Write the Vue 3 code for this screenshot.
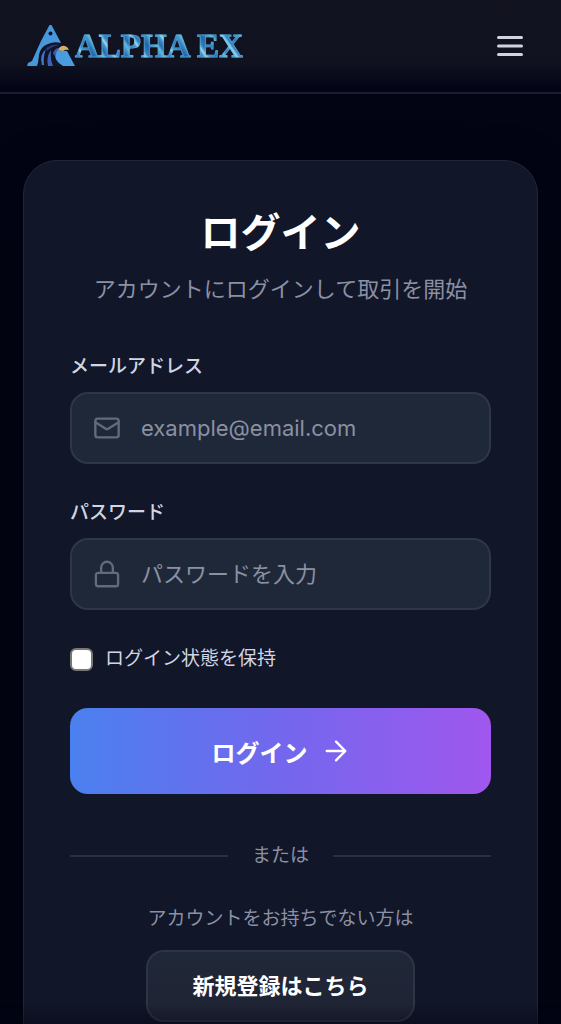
<template>
  <div class="page">
    <!-- Header -->
    <header class="header">
      <a href="#" class="logo" aria-label="ALPHA EX">
        <svg class="logo-mark" viewBox="0 0 48 42" aria-hidden="true">
          <!-- left wing and peak -->
          <path d="M22.500 0 H24.500 L34 18 Q27 16 21 19 Q13 22 12 30 Q12 36 10 41 H0 L1 38 L5 36 L9 27 L14 16 Z" fill="#4797dc" />
          <circle cx="23.500" cy="8.500" r="2" fill="#111426" />
          <!-- right wing -->
          <path d="M30 25 L40 26 L48 41 H34 Q26 37 28 28 Z" fill="#4a9be0" />
          <!-- head and feathers -->
          <path d="M12 41 Q10 29 17 22 Q27 15 37 20 L39 23 Q30 22 28 28 Q27 36 36 41 H27 Q21 35 23 28 Q18 33 19 41 Z" fill="#0f1428" />
          <path d="M15 40 Q12 30 19 24 Q16 31 17 40 Z" fill="#4478c9" />
          <path d="M21 41 Q19 32 24 25 Q23 34 26 41 Z" fill="#3d62b4" />
          <path d="M19 23 Q26 18 33 20 Q25 21 20 26 Z" fill="#253c78" />
          <path d="M26 28 Q28 23 32 23 Q28 28 29 33 Z" fill="#4757a8" />
          <path d="M32 23 Q35 20 38 21 Q41 22 42 25 Q38 24 36 26 L31 25 Z" fill="#d3b268" />
        </svg>
        <span class="logo-text">ALPHA EX</span>
      </a>
      <button type="button" class="menu-btn" aria-label="メニュー">
        <svg viewBox="0 0 32 32" fill="none" stroke="currentColor" stroke-width="3" stroke-linecap="round">
          <path d="M4.500 7.500h23M4.500 16h23M4.500 24.500h23" />
        </svg>
      </button>
    </header>

    <!-- Login card -->
    <main class="main">
      <div class="card">
        <h1 class="title">ログイン</h1>
        <p class="subtitle">アカウントにログインして取引を開始</p>

        <form class="form" @submit.prevent>
          <div class="field">
            <label for="email">メールアドレス</label>
            <div class="input-box">
              <svg class="input-icon" viewBox="0 0 24 24">
                <rect x="2" y="4" width="20" height="16" rx="2" />
                <path d="m2 7 8.970 5.700a1.940 1.940 0 0 0 2.060 0L22 7" />
              </svg>
              <input id="email" v-model="email" type="email" placeholder="example@email.com">
            </div>
          </div>

          <div class="field">
            <label for="password">パスワード</label>
            <div class="input-box">
              <svg class="input-icon" viewBox="0 0 24 24">
                <rect x="2.500" y="11" width="19" height="11.500" rx="2" />
                <path d="M7 11V6.500a5 5 0 0 1 10 0V11" />
              </svg>
              <input id="password" v-model="password" type="password" placeholder="パスワードを入力">
            </div>
          </div>

          <div class="remember">
            <input id="remember" v-model="remember" type="checkbox">
            <label for="remember">ログイン状態を保持</label>
          </div>

          <button type="submit" class="submit-btn">
            <span>ログイン</span>
            <svg viewBox="0 0 24 24">
              <path d="M4 12h16M12 4l8 8-8 8" />
            </svg>
          </button>
        </form>

        <div class="divider"><span>または</span></div>

        <div class="register">
          <p>アカウントをお持ちでない方は</p>
          <a href="#" class="register-btn">新規登録はこちら</a>
        </div>
      </div>
    </main>
    <div class="bottom-fade"></div>
  </div>
</template>

<script setup>
import { ref } from 'vue'

const email = ref('')
const password = ref('')
const remember = ref(false)
</script>

<style>
body {
  margin: 0;
  background: #020414;
}
</style>

<style scoped>
* { box-sizing: border-box; }

.page {
  min-height: 100vh;
  font-family: Inter, "Noto Sans CJK JP", sans-serif;
  font-size: 19px;
  line-height: 28px;
  color: #d1d5e4;
  background: #020414;
}

/* Header */
.header {
  display: flex;
  justify-content: space-between;
  align-items: center;
  height: 94px;
  padding: 0 36px 0 27px;
  background: linear-gradient(to bottom, #12131f 0%, #11121f 68%, #030416 96%);
  border-bottom: 2px solid #1c1d2b;
}

.logo { display: flex; align-items: center; text-decoration: none; }
.logo-mark { width: 48px; height: 42px; }
.logo-text {
  font-family: "Liberation Serif", serif;
  font-size: 33px;
  font-weight: 700;
  line-height: 44px;
  color: transparent;
  -webkit-text-stroke: 1px rgba(110, 190, 225, 0.55);
  background: repeating-linear-gradient(55deg, #2b7cbf 0, #5fbbe2 5px, #2668ac 8px, #3c94d0 12px, #9bdcee 14px, #2f80c2 17px, #2463a6 22px, #2b7cbf 25px);
  -webkit-background-clip: text;
  background-clip: text;
}

.menu-btn {
  display: flex;
  padding: 0;
  border: 0;
  background: none;
  color: #d3d2e2;
}
.menu-btn svg { width: 32px; height: 32px; margin: 0 -1px; }

/* Card */
.main { padding: 66px 23px 64px; }

.card {
  padding: 48px 46px;
  background: #111628;
  border: 1px solid #20263a;
  border-radius: 34px;
  box-shadow: 0 32px 64px rgba(0, 0, 0, 0.35);
}

.title {
  margin: 0 0 16px;
  font-size: 40px;
  font-weight: 700;
  line-height: 48px;
  text-align: center;
  color: #fff;
}

.subtitle {
  margin: 0 -8px 48px;
  font-size: 22px;
  line-height: 32px;
  text-align: center;
  color: #8b90a3;
}

/* Form */
.form { display: flex; flex-direction: column; }
.field { margin-bottom: 35px; }
.field label { display: block; margin-bottom: 11px; font-weight: 500; }

.input-box {
  display: flex;
  align-items: center;
  gap: 20px;
  height: 72px;
  padding: 0 21px;
  background: #1f2838;
  border: 2px solid #2e3748;
  border-radius: 18px;
}

.input-icon {
  flex: none;
  width: 28px;
  height: 28px;
  fill: none;
  stroke: #626b7d;
  stroke-width: 2;
  stroke-linecap: round;
  stroke-linejoin: round;
}

.input-box input {
  flex: 1;
  min-width: 0;
  height: 48px;
  padding: 0;
  border: 0;
  outline: 0;
  background: none;
  font-family: inherit;
  font-size: 22px;
  color: #fff;
}
.input-box input::placeholder { color: #8b90a3; opacity: 1; }

.remember { display: flex; align-items: center; gap: 12px; margin-bottom: 35px; }
.remember input {
  appearance: none;
  width: 23px;
  height: 23px;
  margin: 0;
  background: #fff;
  border: 2px solid #777;
  border-radius: 6px;
}
.remember input:checked { background: #4f80f0; }

.submit-btn {
  display: flex;
  justify-content: center;
  align-items: center;
  gap: 14px;
  height: 86px;
  padding: 0;
  border: 0;
  border-radius: 18px;
  background: linear-gradient(to right, #4a80ef, #7367ed 50%, #a057ee);
  font-family: inherit;
  font-size: 24px;
  font-weight: 700;
  color: #fff;
}
.submit-btn svg {
  width: 28px;
  height: 28px;
  fill: none;
  stroke: #fff;
  stroke-width: 2;
  stroke-linecap: round;
  stroke-linejoin: round;
}

/* Divider */
.divider {
  display: flex;
  align-items: center;
  gap: 24px;
  margin: 48px 0 35px;
  color: #8b90a3;
}
.divider::before,
.divider::after {
  content: "";
  flex: 1;
  height: 2px;
  background: #2a3042;
}

/* Register */
.register { text-align: center; color: #8b90a3; }
.register p { margin: 0 0 17px; }
.register-btn {
  display: inline-block;
  padding: 20px 44px;
  border: 2px solid #2e3446;
  border-radius: 18px;
  background: linear-gradient(to bottom, #1f2838, #202334);
  font-size: 22px;
  font-weight: 700;
  line-height: 28px;
  color: #fff;
  text-decoration: none;
}

.bottom-fade {
  position: fixed;
  right: 0;
  bottom: 0;
  left: 0;
  height: 20px;
  background: linear-gradient(to bottom, transparent, rgba(2, 4, 20, 0.4));
  pointer-events: none;
}
</style>
